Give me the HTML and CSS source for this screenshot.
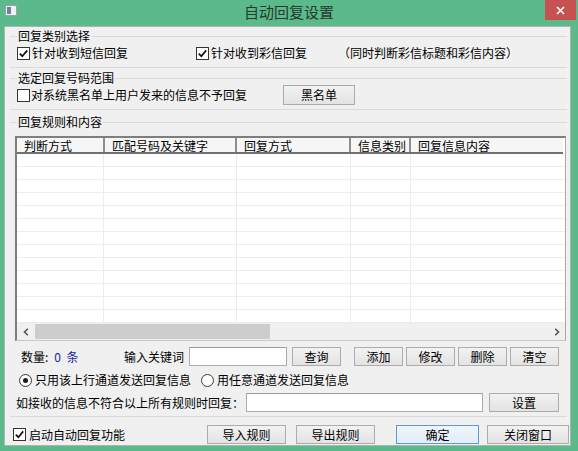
FILE: index.html
```html
<!DOCTYPE html>
<html lang="zh-CN">
<head>
<meta charset="utf-8">
<title>自动回复设置</title>
<link rel="stylesheet" href="styles.css">
</head>
<body>
<div class="window">
  <div class="titlebar">
    <div class="tb-left">
      <svg class="app-icon" width="12" height="11" viewBox="0 0 12 11"><rect x="0.5" y="0.5" width="11" height="10" fill="#eef1f3" stroke="#9aa3aa"/><rect x="2" y="2" width="4" height="7" fill="#6f8596"/></svg>
    </div>
    <div class="title">自动回复设置</div>
    <div class="tb-right">
      <div class="close"><svg width="9" height="9" viewBox="0 0 9 9"><path d="M1 1L8 8M8 1L1 8" stroke="#fff" stroke-width="1.6"/></svg></div>
    </div>
  </div>

  <div class="client">
    <fieldset class="group g1">
      <legend>回复类别选择</legend>
      <div class="row type-row">
        <label class="chk w-sms"><span class="box"><svg viewBox="0 0 11 11" width="11" height="11"><path d="M1.8 5.6L4.3 8.2L9.2 2.4" fill="none" stroke="#111" stroke-width="1.7"/></svg></span>针对收到短信回复</label>
        <label class="chk w-mms"><span class="box"><svg viewBox="0 0 11 11" width="11" height="11"><path d="M1.8 5.6L4.3 8.2L9.2 2.4" fill="none" stroke="#111" stroke-width="1.7"/></svg></span>针对收到彩信回复</label>
        <span class="note">（同时判断彩信标题和彩信内容）</span>
      </div>
    </fieldset>

    <fieldset class="group g2">
      <legend>选定回复号码范围</legend>
      <div class="row black-row">
        <label class="chk w-black"><span class="box"></span>对系统黑名单上用户发来的信息不予回复</label>
        <button class="btn btn-black">黑名单</button>
      </div>
    </fieldset>

    <fieldset class="group g3">
      <legend>回复规则和内容</legend>
      <div class="grid">
        <div class="grid-head">
          <div class="hc c1">判断方式</div>
          <div class="hc c2">匹配号码及关键字</div>
          <div class="hc c3">回复方式</div>
          <div class="hc c4">信息类别</div>
          <div class="hc c5 last">回复信息内容</div>
        </div>
        <div class="grid-body">
          <div class="bc c1"></div>
          <div class="bc c2"></div>
          <div class="bc c3"></div>
          <div class="bc c4"></div>
          <div class="bc c5 last"></div>
        </div>
        <div class="hscroll">
          <div class="arrow"><svg width="6" height="8" viewBox="0 0 6 8"><path d="M4.8 0.8L1.5 4L4.8 7.2" fill="none" stroke="#555" stroke-width="1.6"/></svg></div>
          <div class="thumb"></div>
          <div class="track"></div>
          <div class="arrow"><svg width="6" height="8" viewBox="0 0 6 8"><path d="M1.2 0.8L4.5 4L1.2 7.2" fill="none" stroke="#555" stroke-width="1.6"/></svg></div>
        </div>
      </div>

      <div class="row count-row">
        <span class="count"><span class="count-label">数量:</span><span class="count-val">0&nbsp;&nbsp;条</span></span>
        <span class="kw-label">输入关键词</span>
        <input class="field kw-field" type="text">
        <button class="btn btn-sm btn-query">查询</button>
        <button class="btn btn-sm btn-add">添加</button>
        <button class="btn btn-sm btn-near">修改</button>
        <button class="btn btn-sm btn-near">删除</button>
        <button class="btn btn-sm btn-near">清空</button>
      </div>

      <div class="row radio-row">
        <label class="rad w-rad1"><span class="radio on"></span>只用该上行通道发送回复信息</label>
        <label class="rad"><span class="radio"></span>用任意通道发送回复信息</label>
      </div>

      <div class="row reply-row">
        <span class="reply-label">如接收的信息不符合以上所有规则时回复：</span>
        <input class="field reply-field" type="text">
        <button class="btn btn-set">设置</button>
      </div>
    </fieldset>

    <div class="row bottom-row">
      <label class="chk w-enable"><span class="box"><svg viewBox="0 0 11 11" width="11" height="11"><path d="M1.8 5.6L4.3 8.2L9.2 2.4" fill="none" stroke="#111" stroke-width="1.7"/></svg></span>启动自动回复功能</label>
      <button class="btn btn-big">导入规则</button>
      <button class="btn btn-big btn-export">导出规则</button>
      <button class="btn btn-ok">确定</button>
      <button class="btn btn-close">关闭窗口</button>
    </div>
  </div>
</div>
</body>
</html>
```

FILE: styles.css
```css
* { box-sizing: border-box; }
html, body { margin: 0; padding: 0; }
body {
  width: 578px;
  height: 451px;
  overflow: hidden;
  background: #5bb98b;
  font-family: "Noto Sans CJK SC", "Microsoft YaHei", sans-serif;
  font-size: 12px;
  line-height: 14px;
  color: #000;
}
.window { display: flex; flex-direction: column; height: 451px; }

/* title bar */
.titlebar {
  height: 26px;
  flex: none;
  display: grid;
  grid-template-columns: 1fr auto 1fr;
  align-items: start;
}
.tb-left { display: flex; }
.app-icon { margin: 5px 0 0 5px; }
.title { font-size: 15px; line-height: 24px; color: #263a30; }
.tb-right { display: flex; justify-content: flex-end; }
.close {
  width: 31px;
  height: 20px;
  margin-right: 2px;
  background: #c75050;
  display: flex;
  align-items: center;
  justify-content: center;
}

/* client area */
.client {
  flex: 1;
  margin: 0 7px 5px 4px;
  background: #f0f0f0;
  border: 1px solid #a9b5ae;
  display: flex;
  flex-direction: column;
}

.group {
  margin: 0 3px 0 5px;
  padding: 0 0 0 7px;
  min-width: 0;
  border: 0;
  border-top: 1px solid #dadada;
  border-bottom: 1px solid #dadada;
}
.group legend { padding: 0 1px; height: 14px; line-height: 14px; }
.g1 { margin-top: 2px; padding-bottom: 7px; }
.g2 { margin-top: 3px; padding-bottom: 4px; }
.g3 { margin-top: 5px; padding: 0 1px 4px 5px; }
.g3 legend { margin-left: 2px; }

.row { display: flex; align-items: center; white-space: nowrap; }
.type-row { margin-top: 3px; height: 14px; }
.black-row { height: 20px; }

.chk, .rad { display: flex; align-items: center; height: 14px; }
.box {
  width: 13px;
  height: 13px;
  flex: none;
  border: 1px solid #333;
  background: #fff;
  display: flex;
  align-items: center;
  justify-content: center;
  margin-right: 2px;
}
.w-sms { width: 179px; }
.w-mms { width: 142px; }
.w-black { width: 266px; }
.w-black .box { margin-right: 1px; }

.btn {
  font-family: inherit;
  font-size: 12px;
  line-height: 14px;
  color: #000;
  padding: 0;
  margin: 0;
  border: 1px solid #acacac;
  background: linear-gradient(#f2f2f2, #e3e3e3);
  display: flex;
  align-items: center;
  justify-content: center;
}
.btn-black { width: 72px; height: 20px; }

/* grid */
.grid {
  margin-top: 7px;
  height: 205px;
  border-top: 2px solid #7e7e7e;
  border-left: 2px solid #7e7e7e;
  border-right: 1px solid #a8a8a8;
  border-bottom: 1px solid #c8c8c8;
  background: #fff;
  display: flex;
  flex-direction: column;
}
.grid-head {
  height: 16px;
  flex: none;
  display: flex;
  background: #f6f6f6;
  border-bottom: 2px solid #707070;
  margin-right: 2px;
}
.hc {
  height: 14px;
  line-height: 15px;
  padding-left: 7px;
  border-right: 2px solid #8e8e8e;
  white-space: nowrap;
}
.hc.last { border-right: 0; }
.c1 { width: 88px; }
.c2 { width: 132px; }
.c3 { width: 114px; }
.c4 { width: 60px; }
.c5 { width: 152px; }
.grid-body {
  flex: 1;
  display: flex;
  background: repeating-linear-gradient(to bottom, #fff 0, #fff 12px, #ececec 12px, #ececec 13px);
}
.bc { border-right: 1px solid #ececec; }
.bc.c1 { width: 87px; }
.bc.c2 { width: 133px; }
.bc.c5 { border-right: 0; }
.hscroll {
  height: 17px;
  flex: none;
  display: flex;
  background: #f0f0f0;
}
.arrow { width: 17px; display: flex; align-items: center; justify-content: center; }
.thumb { width: 235px; margin: 1px 0 1px 1px; background: #cdcdcd; }
.track { flex: 1; }

/* rows below grid */
.count-row { margin-top: 6px; height: 19px; }
.count { width: 103px; margin-left: 6px; display: flex; }
.count-val { color: #23239c; margin-left: 6px; }
.kw-label { width: 65px; }
.field {
  height: 19px;
  border: 1px solid #abadb3;
  border-top-color: #9a9ca3;
  background: #fff;
  padding: 0;
  margin: 0;
  font: inherit;
}
.kw-field { width: 98px; }
.btn-sm { width: 49px; height: 19px; }
.btn-query { margin-left: 5px; }
.btn-add { margin-left: 13px; }
.btn-near { margin-left: 3px; }

.radio-row { margin-top: 7px; height: 14px; }
.radio {
  width: 13px;
  height: 13px;
  flex: none;
  border-radius: 50%;
  border: 1px solid #3a3a3a;
  background: #fff;
  display: flex;
  align-items: center;
  justify-content: center;
  margin-right: 3px;
}
.radio.on::after {
  content: "";
  width: 5px;
  height: 5px;
  border-radius: 50%;
  background: #1a1a1a;
}
.w-rad1 { width: 182px; margin-left: 4px; }

.reply-row { margin-top: 6px; height: 19px; }
.reply-label { width: 230px; margin-left: 1px; }
.reply-field { width: 237px; }
.btn-set { width: 70px; height: 19px; margin-left: 6px; }

/* bottom */
.bottom-row { margin-top: 8px; height: 19px; }
.w-enable { width: 194px; margin-left: 8px; }
.w-enable .box { margin-right: 3px; }
.btn-big { width: 79px; height: 19px; }
.btn-export { margin-left: 10px; }
.btn-ok {
  width: 83px;
  height: 19px;
  margin-left: 21px;
  border-color: #5b9bd5;
  background: linear-gradient(#eef5fb, #e3edf7);
}
.btn-close { width: 82px; height: 19px; margin-left: 8px; }
```
